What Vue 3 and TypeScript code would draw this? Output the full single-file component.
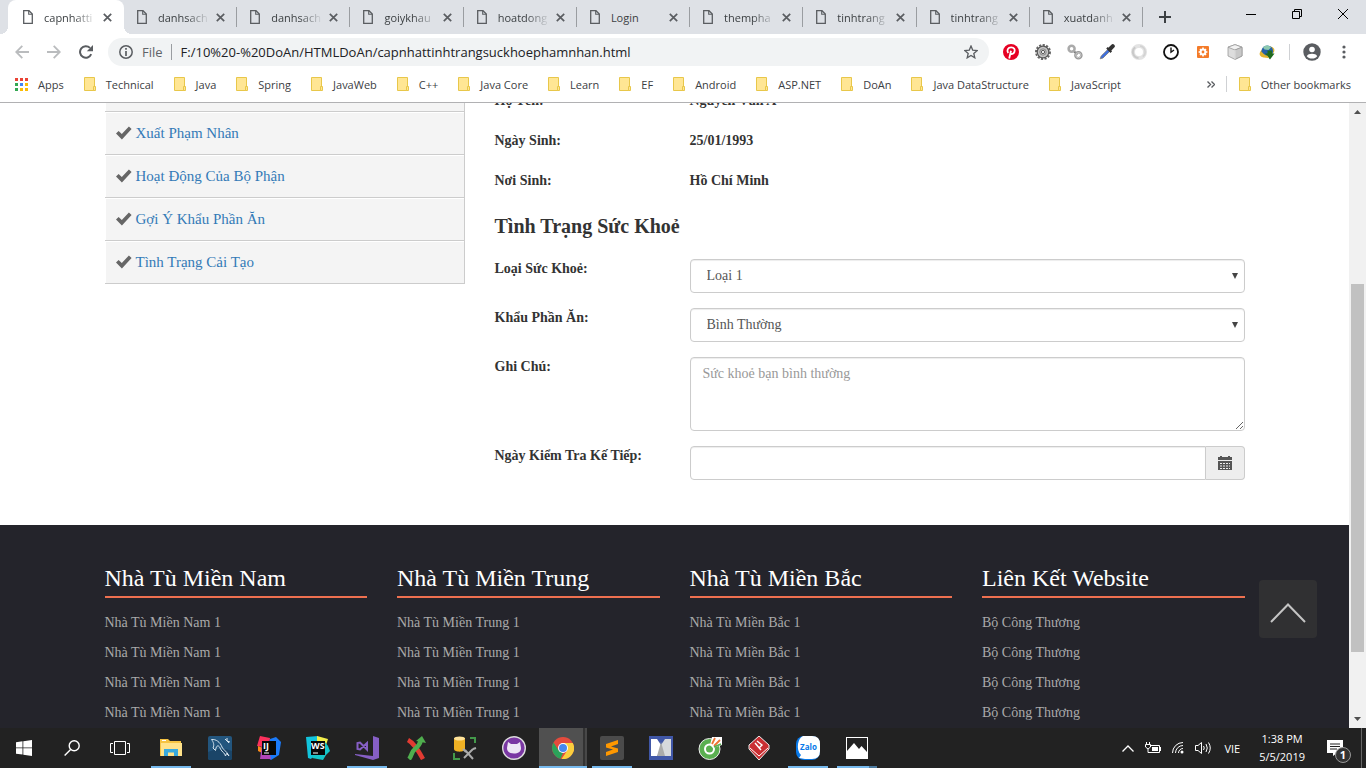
<script setup lang="ts">
import { ref } from 'vue'

interface FooterColumn {
  title: string
  link: string
}

const tabs: string[] = [
  'capnhatti', 'danhsach', 'danhsach', 'goiykhau', 'hoatdong', 'Login',
  'thempha', 'tinhtrang', 'tinhtrang', 'xuatdanh',
]

const bookmarks: string[] = [
  'Technical', 'Java', 'Spring', 'JavaWeb', 'C++', 'Java Core', 'Learn', 'EF',
  'Android', 'ASP.NET', 'DoAn', 'Java DataStructure', 'JavaScript',
]

const appColors: string[] = [
  '#ea4335', '#ea4335', '#ea4335',
  '#34a853', '#4285f4', '#fbbc05',
  '#34a853', '#fbbc05', '#fbbc05',
]

const menu: string[] = ['Xuất Phạm Nhân', 'Hoạt Động Của Bộ Phận', 'Gợi Ý Khẩu Phần Ăn', 'Tình Trạng Cải Tạo']

const footerColumns: FooterColumn[] = [
  { title: 'Nhà Tù Miền Nam', link: 'Nhà Tù Miền Nam 1' },
  { title: 'Nhà Tù Miền Trung', link: 'Nhà Tù Miền Trung 1' },
  { title: 'Nhà Tù Miền Bắc', link: 'Nhà Tù Miền Bắc 1' },
  { title: 'Liên Kết Website', link: 'Bộ Công Thương' },
]

const url = ref('F:/10%20-%20DoAn/HTMLDoAn/capnhattinhtrangsuckhoephamnhan.html')
const health = ref('Loại 1')
const ration = ref('Bình Thường')
const note = ref('')
const nextCheck = ref('')
</script>

<template>
  <div class="desktop">
    <header class="browser">
      <div class="tab-bar">
        <div class="tabs">
          <div v-for="(tab, i) in tabs" :key="i" class="tab" :class="{ active: i === 0 }">
            <svg class="page-icon" width="10" height="14" viewBox="0 0 10 14" fill="none" stroke="#5a5d61">
              <path d="M.7 .7H6L9.3 4V13.3H.7Z" stroke-width="1.3" />
              <path d="M5.7 .7V4.3H9.3" stroke-width="1.1" />
            </svg>
            <span class="tab-title" :class="{ fade: tab.length > 5 }">{{ tab }}</span>
            <button class="tab-close" type="button" aria-label="Close tab">
              <svg width="9" height="9" viewBox="0 0 9 9" stroke="#5a5d61" stroke-width="1.7"><path d="M.8 .8L8.2 8.2M8.2 .8L.8 8.2" /></svg>
            </button>
          </div>
        </div>
        <button class="new-tab" type="button" aria-label="New tab">
          <svg width="12" height="12" viewBox="0 0 12 12" stroke="#3c4043" stroke-width="2"><path d="M6 0V12M0 6H12" /></svg>
        </button>
        <div class="window-buttons">
          <button type="button" aria-label="Minimize"><svg width="10" height="10" stroke="#000"><path d="M0 5.5H10" /></svg></button>
          <button type="button" aria-label="Restore"><svg width="10" height="10" fill="none" stroke="#000"><path d="M.5 2.5H7.5V9.5H.5ZM2.5 2.5V.5H9.5V7.5H7.5" /></svg></button>
          <button type="button" aria-label="Close"><svg width="10" height="10" stroke="#000"><path d="M0 0L10 10M10 0L0 10" /></svg></button>
        </div>
      </div>

      <div class="toolbar">
        <div class="nav">
          <button type="button" aria-label="Back"><svg width="14" height="14" viewBox="0 0 14 14" fill="none" stroke="#babcbe" stroke-width="1.8"><path d="M14 7H1.5M7.3 .8L1.2 7L7.3 13.2" /></svg></button>
          <button type="button" aria-label="Forward"><svg width="14" height="14" viewBox="0 0 14 14" fill="none" stroke="#babcbe" stroke-width="1.8"><path d="M0 7H12.5M6.7 .8L12.8 7L6.7 13.2" /></svg></button>
          <button type="button" aria-label="Reload"><svg width="14" height="14" viewBox="0 0 14 14"><path d="M12.2 9.2A5.8 5.8 0 1 1 11 2.9" fill="none" stroke="#5a5d61" stroke-width="2" /><path d="M14 0V6.2H7.8Z" fill="#5a5d61" /></svg></button>
        </div>
        <div class="omnibox">
          <svg width="14" height="14" viewBox="0 0 14 14"><circle cx="7" cy="7" r="6.2" fill="none" stroke="#5a5d61" stroke-width="1.5" /><path d="M7 3V4.8M7 6V11" stroke="#5a5d61" stroke-width="1.7" /></svg>
          <span class="scheme">File</span>
          <input v-model="url" type="text" aria-label="Address" />
          <button type="button" aria-label="Bookmark this page"><svg width="14" height="14" viewBox="0 0 14 14"><path d="M7 1L8.7 5.1L13.2 5.5L9.8 8.4L10.8 12.8L7 10.4L3.2 12.8L4.2 8.4L.8 5.5L5.3 5.1Z" fill="none" stroke="#5a5d61" stroke-width="1.3" /></svg></button>
        </div>
        <div class="extensions">
          <button type="button" aria-label="Pinterest">
            <svg width="16" height="16" viewBox="0 0 16 16"><circle cx="8" cy="8" r="8" fill="#e60023" /><path d="M6.2 14.5L8 6.8M5.2 9C3.4 6.2 5 3.4 8.2 3.4C11.2 3.4 12.3 5.4 11.4 7.9C10.6 10.3 8.2 10.5 7.4 9.2" fill="none" stroke="#fff" stroke-width="1.8" /></svg>
          </button>
          <button type="button" aria-label="Settings extension">
            <svg width="16" height="16" viewBox="0 0 16 16"><circle cx="8" cy="8" r="7" fill="none" stroke="#666" stroke-width="2" stroke-dasharray="2.2 1.4" /><circle cx="8" cy="8" r="5.8" fill="#c4c4c4" stroke="#555" stroke-width="1.2" /><circle cx="8" cy="8" r="3.2" fill="none" stroke="#8a8a8a" /><circle cx="8" cy="8" r="1.6" fill="#fff" stroke="#555" /></svg>
          </button>
          <button type="button" aria-label="Link extension">
            <svg width="16" height="16" viewBox="0 0 16 16" fill="none"><path d="M6 6.5L10.5 10.5" stroke="#777" stroke-width="2" /><circle cx="4.6" cy="4.8" r="3" stroke="#aaa" stroke-width="2.5" /><circle cx="11.4" cy="11.2" r="3" stroke="#999" stroke-width="2.5" /><circle cx="11.4" cy="11.2" r="2.6" stroke="#ccc" /></svg>
          </button>
          <button type="button" aria-label="Color picker">
            <svg width="16" height="16" viewBox="0 0 16 16"><path d="M1.2 14.8L2.2 12L8.8 5.5L10.7 7.4L4 14Z" fill="#3d6fe0" stroke="#777" stroke-width=".8" /><path d="M8 3.8L12.3 8.1M10.3 5.8L13.7 2.2" stroke="#333" stroke-width="2.2" /><path d="M11 5L13.8 2.2" stroke="#333" stroke-width="4" stroke-linecap="round" /></svg>
          </button>
          <button type="button" aria-label="Ring extension">
            <svg width="16" height="16" viewBox="0 0 16 16" fill="none"><circle cx="8" cy="8" r="6" stroke="#e3e3e3" stroke-width="4" /><path d="M4.2 3.3A6 6 0 0 0 7.5 14" stroke="#c9c9c9" stroke-width="2" /><path d="M11.8 12.7A6 6 0 0 0 9 2" stroke="#d2d2d2" stroke-width="1.5" /></svg>
          </button>
          <button type="button" aria-label="Clock extension">
            <svg width="16" height="16" viewBox="0 0 16 16" fill="none" stroke="#111"><circle cx="8" cy="8" r="7" stroke-width="1.8" /><path d="M8 3.5V8.2L11 6" stroke-width="1.4" /></svg>
          </button>
          <button type="button" aria-label="Gear extension">
            <svg width="16" height="16" viewBox="0 0 16 16"><rect x="2" y="2" width="12" height="12" rx="1" fill="#f47b29" /><circle cx="8" cy="8" r="2.4" fill="none" stroke="#fff" stroke-width="2" /><path d="M8 3.6V5M8 11V12.4M3.6 8H5M11 8H12.4M5 5L6 6M10 10L11 11M11 5L10 6M5 11L6 10" stroke="#fff" stroke-width="1.6" /></svg>
          </button>
          <button type="button" aria-label="Cube extension">
            <svg width="16" height="16" viewBox="0 0 16 16" stroke="#999" stroke-width=".8"><path d="M8 .6L15 3.2V12L8 15.4L1 12V3.2Z" fill="#ddd" /><path d="M1 3.2L8 6L15 3.2L8 .6Z" fill="#f2f2f2" /><path d="M8 6V15.4L15 12V3.2Z" fill="#c8c8c8" /><path d="M8 6V15.4" fill="none" stroke="#fff" /></svg>
          </button>
          <button type="button" aria-label="Download manager">
            <svg width="16" height="16" viewBox="0 0 16 16"><ellipse cx="8" cy="8" rx="7.8" ry="5" fill="#e2b52e" transform="rotate(-25 8 8)" /><circle cx="8.3" cy="7.2" r="5.8" fill="#2460a8" /><path d="M4 3.5C6 1 10 1 12 3.4L9.5 6L5.5 5.5Z" fill="#8cc9b0" /><path d="M8.5 6.5H13V9.5H15.5L11 15.5L6 9.5H8.5Z" fill="#1f6b1e" /><path d="M1 9C3 13 7 14 10 14L8.5 11.8C6 11 4 10 3 8Z" fill="#e2b52e" /></svg>
          </button>
        </div>
        <div class="profile">
          <button type="button" aria-label="Profile"><svg width="18" height="18" viewBox="0 0 18 18"><circle cx="9" cy="9" r="8.7" fill="#5a5d61" /><circle cx="9" cy="6.5" r="2.8" fill="#fff" /><path d="M3.8 13.2C4.6 11.5 6.6 10.8 9 10.8S13.4 11.5 14.2 13.2C13 14.8 11.2 15.6 9 15.6S5 14.8 3.8 13.2Z" fill="#fff" /></svg></button>
          <button type="button" aria-label="Menu"><svg width="4" height="14" viewBox="0 0 4 14" fill="#5a5d61"><circle cx="2" cy="2" r="1.6" /><circle cx="2" cy="7" r="1.6" /><circle cx="2" cy="12" r="1.6" /></svg></button>
        </div>
      </div>

      <nav class="bookmarks" aria-label="Bookmarks">
        <a href="#" class="bookmark">
          <svg width="13" height="13"><rect v-for="(c, i) in appColors" :key="i" :x="(i % 3) * 5" :y="Math.floor(i / 3) * 5" width="3" height="3" :fill="c" /></svg>
          Apps
        </a>
        <a v-for="name in bookmarks" :key="name" href="#" class="bookmark">
          <svg width="12" height="14"><path d="M.5 .5H10.5V13.5H.5Z" fill="#ffe694" stroke="#e8c74a" /><path d="M9.5 9.5H11.5V13.5H9.5Z" fill="#ffe694" stroke="#e8c74a" /></svg>
          {{ name }}
        </a>
        <div class="bookmarks-end">
          <button type="button" aria-label="More bookmarks"><svg width="8" height="7" fill="none" stroke="#5a5d61" stroke-width="1.4"><path d="M.5 .5L3.5 3.5L.5 6.5M4.5 .5L7.5 3.5L4.5 6.5" /></svg></button>
          <a href="#" class="bookmark other">
            <svg width="12" height="14"><path d="M.5 .5H10.5V13.5H.5Z" fill="#ffe694" stroke="#e8c74a" /><path d="M9.5 9.5H11.5V13.5H9.5Z" fill="#ffe694" stroke="#e8c74a" /></svg>
            Other bookmarks
          </a>
        </div>
      </nav>
    </header>

    <div class="viewport">
      <div class="page">
        <main class="content">
          <ul class="side-menu">
            <li class="stub"></li>
            <li v-for="item in menu" :key="item">
              <svg width="16" height="14" viewBox="0 0 16 14"><path d="M0 7.6L2.6 5L5.8 8L12.9 .6L15.6 3.1L5.9 13.6Z" fill="#666" /></svg>
              <a href="#">{{ item }}</a>
            </li>
          </ul>
          <form class="details" @submit.prevent>
            <dl>
              <div><dt>Họ Tên:</dt><dd>Nguyễn Văn A</dd></div>
              <div><dt>Ngày Sinh:</dt><dd>25/01/1993</dd></div>
              <div><dt>Nơi Sinh:</dt><dd>Hồ Chí Minh</dd></div>
            </dl>
            <h3>Tình Trạng Sức Khoẻ</h3>
            <div class="field">
              <label for="health">Loại Sức Khoẻ:</label>
              <div class="select">
                <select id="health" v-model="health" class="control"><option>Loại 1</option></select>
                <svg width="6" height="6"><path d="M0 0H6L3 6Z" fill="#444" /></svg>
              </div>
            </div>
            <div class="field">
              <label for="ration">Khẩu Phần Ăn:</label>
              <div class="select">
                <select id="ration" v-model="ration" class="control"><option>Bình Thường</option></select>
                <svg width="6" height="6"><path d="M0 0H6L3 6Z" fill="#444" /></svg>
              </div>
            </div>
            <div class="field">
              <label for="note">Ghi Chú:</label>
              <textarea id="note" v-model="note" class="control" rows="3" placeholder="Sức khoẻ bạn bình thường"></textarea>
            </div>
            <div class="field">
              <label for="next-check">Ngày Kiểm Tra Kế Tiếp:</label>
              <div class="date-group">
                <input id="next-check" v-model="nextCheck" class="control" type="text" />
                <button type="button" aria-label="Open calendar">
                  <svg width="14" height="14" viewBox="0 0 14 14"><path d="M0 1H2V0H4V1H10V0H12V1H14V4H0ZM0 5H14V14H0Z" fill="#555" /><path d="M2 7.5H12M2 10H12M2 12.5H12" stroke="#eee" stroke-dasharray="2 1" /></svg>
                </button>
              </div>
            </div>
          </form>
        </main>
        <footer class="footer">
          <div class="footer-grid">
            <section v-for="col in footerColumns" :key="col.title">
              <h2>{{ col.title }}</h2>
              <ul>
                <li v-for="n in 4" :key="n"><a href="#">{{ col.link }}</a></li>
              </ul>
            </section>
          </div>
        </footer>
        <button class="to-top" type="button" aria-label="Back to top">
          <svg width="36" height="20" viewBox="0 0 36 20" fill="none" stroke="#c4c4c4" stroke-width="2"><path d="M1 19L18 1.5L35 19" /></svg>
        </button>
      </div>
      <div class="scrollbar">
        <svg width="17" height="17"><path d="M5 11H12L8.500 7Z" fill="#505050" /></svg>
        <div class="track"><div class="thumb"></div></div>
        <svg width="17" height="17"><path d="M5 6H12L8.500 10Z" fill="#505050" /></svg>
      </div>
    </div>

    <div class="taskbar">
      <div class="system">
        <button type="button" aria-label="Start"><svg width="16" height="16" viewBox="0 0 16 16" fill="#fff"><path d="M0 2.200L6.500 1.300V7.500H0ZM7.300 1.200L16 0V7.500H7.300ZM0 8.300H6.500V14.600L0 13.700ZM7.300 8.300H16V16L7.300 14.800Z" /></svg></button>
        <button type="button" aria-label="Search"><svg width="16" height="16" fill="none" stroke="#fff" stroke-width="1.4"><circle cx="10.2" cy="5.8" r="5" /><path d="M6.600 9.400L.6 15.400" /></svg></button>
        <button type="button" aria-label="Task view"><svg width="20" height="14" fill="none" stroke="#fff"><path d="M4.500 .5H15.500V13.500H4.500ZM3 2.500H.5V11.500H3M17 2.500H19.500V11.500H17" /></svg></button>
      </div>
      <div class="apps">
        <button type="button" class="open" aria-label="File Explorer">
          <svg width="24" height="24" viewBox="0 0 24 24"><path d="M1 3H9L11 5H22V20H1Z" fill="#f5c343" /><path d="M2 7H23V20H2Z" fill="#ffe28a" /><path d="M5 13H19V20H15V16.500H9V20H5Z" fill="#38a9de" /><path d="M3 4.500H7" stroke="#fff" /></svg>
        </button>
        <button type="button" aria-label="MySQL Workbench">
          <svg width="24" height="24" viewBox="0 0 24 24"><rect width="24" height="24" rx="2" fill="#23567e" /><path d="M0 16Q12 10 24 15V22Q24 24 22 24H2Q0 24 0 22Z" fill="#1a4568" /><path d="M3.500 3.500C8 3 12 6 14 11C15 14 18 14 21 20L18.500 17.500L17.500 20C17 17 14 16 12.500 13C11 9 9 9 8 12L7.500 14.500L5 12C6.500 9 5.500 6 3.500 3.500M17 3L21 7M19 2V5L22 6" fill="none" stroke="#d7e5ef" stroke-width="1" /></svg>
        </button>
        <button type="button" aria-label="IntelliJ IDEA">
          <svg width="24" height="24" viewBox="0 0 24 24"><path d="M3 0L13 2L12 12L0 10Z" fill="#fc315d" /><path d="M13 3L19 1L24 6L22 19L14 24L8 20Z" fill="#1b7bfa" /><path d="M1 10L6 12L5 17L1 15Z" fill="#fc8a19" /><path d="M5 9L3 23L14 23L12 14Z" fill="#b145b8" /><rect x="5" y="5" width="14" height="14" fill="#080808" /><path d="M7 17H12" stroke="#fff" /><text x="6" y="13" class="logo-text">IJ</text></svg>
        </button>
        <button type="button" aria-label="WebStorm">
          <svg width="24" height="24" viewBox="0 0 24 24"><path d="M0 1L12 0L14 12L5 23L2 22Z" fill="#12c4dc" /><path d="M11 0L22 3L20 9L11 7Z" fill="#f3ef4c" /><path d="M19 6L22 10L24 15L20 19L17 24L6 22L9 11Z" fill="#14c6c9" /><rect x="5" y="5" width="14" height="14" fill="#080808" /><path d="M7 17H12" stroke="#fff" /><text x="5" y="13" class="logo-text">WS</text></svg>
        </button>
        <button type="button" class="open" aria-label="Visual Studio">
          <svg width="24" height="24" viewBox="0 0 24 24"><path d="M18 0L24 2V22L18 24L0 19V18L18 20Z" fill="#865fc5" /><path d="M2.500 7V13L5 13.500L12 7V13.500L5 6.500Z" fill="none" stroke="#865fc5" stroke-width="2" /></svg>
        </button>
        <button type="button" aria-label="X application">
          <svg width="20" height="24" viewBox="0 0 20 24"><path d="M2 4C8 7 12 14 17 23" fill="none" stroke="#e23b32" stroke-width="4.500" /><path d="M3 23C6 20 5 16 9 13S14 8 15 4" fill="none" stroke="#4fae4e" stroke-width="4.500" /><path d="M10 5L16 0L20 7Z" fill="#4fae4e" /></svg>
        </button>
        <button type="button" aria-label="SQL tools">
          <svg width="24" height="24" viewBox="0 0 24 24"><path d="M1 2V13C1 16.500 12 16.500 12 13V2Z" fill="#efb124" /><ellipse cx="6.5" cy="2.500" rx="5.500" ry="2" fill="#ffe39a" /><path d="M17 2H22V7M1 17V23H7" fill="none" stroke="#43994a" stroke-width="2" /><path d="M11 22L20 13M20 13L23 12M12 14L20 23M10 13L13 16" stroke="#ababab" stroke-width="2" /></svg>
        </button>
        <button type="button" aria-label="GitHub Desktop">
          <svg width="24" height="24" viewBox="0 0 24 24"><circle cx="12" cy="12" r="11.300" fill="#7a38a3" stroke="#ddd" stroke-width="1.400" /><path d="M6 6L9 8H15L18 6L19 12C19 16 16 17.500 12 17.500S5 16 5 12Z" fill="#eee8f5" /></svg>
        </button>
        <button type="button" class="open current" aria-label="Chrome">
          <svg width="22" height="22" viewBox="0 0 22 22"><circle cx="11" cy="11" r="11" fill="#e44b3d" /><path d="M1.500 5.500L6.700 13.500L11 16L8.500 21.700A11 11 0 0 1 1.500 5.500Z" fill="#2ba25a" /><path d="M11 6H20.800A11 11 0 0 1 9.500 22L15.300 13.500Z" fill="#fbce3d" /><circle cx="11" cy="11" r="5" fill="#fff" /><circle cx="11" cy="11" r="4" fill="#4688ef" /></svg>
        </button>
        <button type="button" class="open" aria-label="Sublime Text">
          <svg width="24" height="24" viewBox="0 0 24 24"><rect width="24" height="24" rx="2" fill="#4b4b4b" /><path d="M6 8L18 4V8L11 10.400L18 12.500V16L6 20V16L13 13.500L6 11.500Z" fill="#ff9800" /></svg>
        </button>
        <button type="button" aria-label="Mirror application">
          <svg width="24" height="24" viewBox="0 0 24 24"><rect width="24" height="24" fill="#4057a7" /><path d="M2 3H8L12 9V14L8 20H2Z" fill="#fff" /><path d="M22 3H16L12 9V20H22Z" fill="#d7d9dc" /><path d="M12 6L16 20H8Z" fill="#aaa" /></svg>
        </button>
        <button type="button" aria-label="Coc Coc">
          <svg width="24" height="24" viewBox="0 0 24 24"><circle cx="11.500" cy="13" r="10.500" fill="#5aaf50" stroke="#eee" /><circle cx="11.500" cy="13" r="4.500" fill="none" stroke="#fff" stroke-width="2" /><path d="M12 9L14 1H24V9L15 12Z" fill="#fff" /><path d="M14 8L17 2M16 10L22 4" stroke="#ef7433" stroke-width="1.800" /><path d="M16 11L23 8" stroke="#5aaf50" stroke-width="1.800" /></svg>
        </button>
        <button type="button" aria-label="Visual Paradigm">
          <svg width="22" height="24" viewBox="0 0 22 24"><path d="M11 0L21 9V13L11 24L1 13V9Z" fill="#c92e32" stroke="#eee" /><path d="M2 12L11 20L20 12" fill="none" stroke="#fff" /><path d="M7 7L13 14M9 5L14 9L11 12" fill="none" stroke="#fff" stroke-width="1.400" /></svg>
        </button>
        <button type="button" class="open" aria-label="Zalo">
          <svg width="24" height="24" viewBox="0 0 24 24"><rect width="24" height="24" rx="8" fill="#0879e9" /><path d="M7 0H16Q24 0 24 8V15Q24 23 16 23H9L3 22L5 19Q1 15 2 8Q3 2 7 0Z" fill="#fff" /><text x="4" y="14" class="zalo-text">Zalo</text></svg>
        </button>
        <button type="button" class="open several" aria-label="Photos">
          <svg width="22" height="22" viewBox="0 0 22 22"><rect x=".5" y=".5" width="21" height="21" fill="#222" stroke="#fff" /><path d="M1 14L8 6L13 12L15.500 9L21 15V21H1Z" fill="#fff" /></svg>
        </button>
      </div>
      <div class="tray">
        <button type="button" aria-label="Hidden icons"><svg width="12" height="7" fill="none" stroke="#fff" stroke-width="1.300"><path d="M.5 6.500L6 1L11.500 6.500" /></svg></button>
        <button type="button" aria-label="Battery"><svg width="16" height="12" fill="none" stroke="#fff"><path d="M5 3.500H14.500V10.500H5.500M15.500 5V9" /><path d="M7 5H13V9H7Z" fill="#fff" stroke="none" /><path d="M1.500 0V2M4.500 0V2M.5 2.500H5.500V5L3 7L.5 5ZM3 7V10.500H6" /></svg></button>
        <button type="button" aria-label="Network"><svg width="12" height="12" fill="none" stroke="#fff"><path d="M.5 11A10.500 10.500 0 0 1 11 .5M3.500 11A7.500 7.500 0 0 1 11 3.500M6.500 11A4.500 4.500 0 0 1 11 6.500" /><circle cx="10" cy="10" r="1.500" fill="#fff" stroke="none" /></svg></button>
        <button type="button" aria-label="Volume"><svg width="17" height="14" fill="none" stroke="#fff"><path d="M.5 4.500H3L6.500 1.500V12.500L3 9.500H.5ZM8.500 5Q10 7 8.500 9M11 3Q13.500 7 11 11M13.500 1.500Q17 7 13.500 12.500" /></svg></button>
        <span class="language">VIE</span>
        <div class="clock"><span>1:38 PM</span><span>5/5/2019</span></div>
        <button type="button" class="notices" aria-label="Notifications">
          <svg width="16" height="16"><path d="M0 0H16V13H10L6 16V13H0Z" fill="#fff" /><path d="M3 4H13M3 6.500H13M3 9H10" stroke="#222" /></svg>
          <span class="badge">1</span>
        </button>
        <span class="show-desktop"></span>
      </div>
    </div>
  </div>
</template>

<style>
body {
  margin: 0;
}
</style>

<style scoped>
* {
  box-sizing: border-box;
}
.desktop {
  display: flex;
  flex-direction: column;
  height: 100vh;
  overflow: hidden;
  background: #fff;
  font-family: "Open Sans", "Noto Sans", sans-serif;
  font-size: 11px;
  color: #3c4043;
}
svg {
  display: block;
  flex: none;
}
button {
  display: flex;
  align-items: center;
  justify-content: center;
  margin: 0;
  padding: 0;
  border: 0;
  background: none;
  font: inherit;
  color: inherit;
}
a {
  text-decoration: none;
  color: inherit;
}
ul,
dl,
dd,
h2,
h3 {
  margin: 0;
  padding: 0;
  list-style: none;
}

/* Browser frame */
.browser {
  flex: none;
  border-bottom: 1px solid #b1b1b3;
}
.tab-bar {
  display: flex;
  height: 34px;
  padding-left: 8px;
  background: #dee1e6;
}
.tabs {
  display: flex;
  flex: 0 1 1135px;
  min-width: 0;
}
.tab {
  position: relative;
  display: flex;
  flex: 1 1 0;
  align-items: center;
  min-width: 0;
  padding: 0 12px 0 13px;
}
.tab:not(.active)::after {
  content: "";
  position: absolute;
  top: 7px;
  right: 0;
  width: 1px;
  height: 20px;
  background: #9a9da1;
}
.tab.active {
  flex: 0 0 116px;
  padding-left: 15px;
  background: #fff;
  border-radius: 8px 8px 0 0;
}
.tab.active::before,
.tab.active::after {
  content: "";
  position: absolute;
  bottom: 0;
  width: 8px;
  height: 8px;
}
.tab.active::before {
  right: 100%;
  background: radial-gradient(circle at 0 0, transparent 8px, #fff 8px);
}
.tab.active::after {
  left: 100%;
  background: radial-gradient(circle at 100% 0, transparent 8px, #fff 8px);
}
.tab-title {
  flex: 1;
  margin-left: 11px;
  white-space: nowrap;
}
.fade {
  mask-image: linear-gradient(to right, #000 calc(100% - 24px), transparent);
}
.tab-close {
  margin-left: 6px;
}
.new-tab {
  width: 44px;
}
.window-buttons {
  display: flex;
  height: 28px;
  margin-left: auto;
}
.window-buttons button {
  width: 46px;
}
.toolbar {
  display: flex;
  align-items: center;
  height: 36px;
}
.nav {
  display: flex;
  gap: 18px;
  padding: 0 15px;
}
.omnibox {
  display: flex;
  flex: 1;
  align-items: center;
  height: 28px;
  padding: 0 11px;
  border-radius: 14px;
  background: #f1f3f4;
  font-size: 13px;
}
.scheme {
  margin-left: 9px;
  padding-right: 8px;
  border-right: 1px solid #9a9da1;
  line-height: 16px;
  color: #5f6368;
}
.omnibox input {
  flex: 1;
  min-width: 0;
  padding: 0 0 0 9px;
  border: 0;
  outline: 0;
  background: none;
  font: inherit;
  color: #202124;
}
.extensions {
  display: flex;
  gap: 16px;
  padding: 0 14px;
}
.profile {
  display: flex;
  align-items: center;
  gap: 21px;
  height: 16px;
  padding: 0 20px 0 13px;
  border-left: 1px solid #cfd1d4;
}
.bookmarks {
  display: flex;
  align-items: center;
  gap: 20px;
  height: 32px;
  padding: 0 15px 4px;
  white-space: nowrap;
}
.bookmark {
  display: flex;
  align-items: center;
  gap: 10px;
}
.bookmarks-end {
  display: flex;
  align-items: center;
  gap: 11px;
  margin-left: auto;
}
.other {
  height: 16px;
  padding-left: 12px;
  border-left: 1px solid #cfd1d4;
}

/* Web page */
.viewport {
  display: flex;
  flex: 1;
  min-height: 0;
  font-family: "Liberation Serif", "Times New Roman", serif;
  font-size: 14px;
  line-height: 20px;
  color: #333;
}
.page {
  position: relative;
  display: flex;
  flex: 1;
  flex-direction: column;
  overflow: hidden;
}
.content {
  display: grid;
  grid-template-columns: 360fr 750fr;
  gap: 30px;
  width: calc(100% - 30px);
  max-width: 1140px;
  margin: 0 auto;
  padding-bottom: 45px;
}
.side-menu li {
  display: flex;
  align-items: center;
  gap: 4px;
  height: 43px;
  padding-left: 11px;
  border-right: 1px solid #ccc;
  border-bottom: 1px solid #ccc;
  background: #f4f4f4;
  box-shadow: inset 1px 1px 0 #fff;
  font-size: 15px;
  color: #337ab7;
}
.side-menu .stub {
  height: 9px;
  box-shadow: inset 1px 0 0 #fff;
}
.details {
  margin-top: -12px;
}
dl div,
.field {
  display: grid;
  grid-template-columns: 195fr 555fr;
}
dl div {
  margin-bottom: 20px;
}
dt,
dd,
label {
  font-weight: 700;
}
h3 {
  margin: 24px 0 22px;
  font-size: 20px;
  line-height: 22px;
}
.field + .field {
  margin-top: 15px;
}
.control {
  display: block;
  width: 100%;
  height: 34px;
  margin: 0;
  padding: 6px 12px;
  border: 1px solid #ccc;
  border-radius: 4px;
  outline: 0;
  background: #fff;
  box-shadow: inset 0 1px 1px rgba(0, 0, 0, 0.075);
  font: inherit;
  color: #555;
}
.select {
  position: relative;
}
.select .control {
  padding-left: 16px;
  appearance: none;
}
.select svg {
  position: absolute;
  top: 14px;
  right: 7px;
  pointer-events: none;
}
textarea.control {
  height: 74px;
  resize: vertical;
}
textarea::placeholder {
  color: #999;
}
.date-group {
  display: flex;
}
.date-group .control {
  border-radius: 4px 0 0 4px;
}
.date-group button {
  flex: none;
  width: 39px;
  border: 1px solid #ccc;
  border-left: 0;
  border-radius: 0 4px 4px 0;
  background: #eee;
}
.footer {
  flex: 1;
  min-height: 0;
  background: #24242b;
}
.footer-grid {
  display: grid;
  grid-template-columns: repeat(4, 1fr);
  gap: 30px;
  width: calc(100% - 30px);
  max-width: 1140px;
  margin: 0 auto;
  padding-top: 40px;
}
.footer h2 {
  padding-bottom: 5px;
  border-bottom: 2px solid #ee7050;
  font-size: 24px;
  font-weight: 400;
  line-height: 26px;
  color: #fff;
}
.footer ul {
  padding-top: 10px;
}
.footer li {
  line-height: 30px;
  color: #aaa;
}
.to-top {
  position: absolute;
  right: 32px;
  bottom: 90px;
  width: 58px;
  height: 58px;
  padding-top: 8px;
  border-radius: 4px;
  background: #303032;
}
.scrollbar {
  display: flex;
  flex: none;
  flex-direction: column;
  width: 17px;
  background: #f1f1f1;
}
.track {
  position: relative;
  flex: 1;
}
.thumb {
  position: absolute;
  top: 27.7%;
  right: 2px;
  left: 2px;
  height: 62.3%;
  background: #c1c1c1;
}

/* Taskbar */
.taskbar {
  display: flex;
  flex: none;
  height: 40px;
  background: #222;
  color: #fff;
}
.system,
.apps {
  display: flex;
}
.system button,
.apps button {
  position: relative;
  width: 48px;
}
.apps {
  gap: 1px;
  margin-left: 3px;
}
.open::after {
  content: "";
  position: absolute;
  right: 4px;
  bottom: 0;
  left: 4px;
  height: 2px;
  background: #76b9ed;
}
.several::after {
  background: linear-gradient(to right, #76b9ed 32px, #4d7ba0 32px);
}
.current {
  background: linear-gradient(to right, #505050 44px, #333 44px, #333 46px, #484848 46px);
}
.current::after {
  right: 0;
  left: 0;
}
.logo-text {
  font: bold 9px "Open Sans", sans-serif;
  fill: #fff;
}
.zalo-text {
  font: bold 8px "Open Sans", sans-serif;
  fill: #0879e9;
}
.tray {
  display: flex;
  align-items: center;
  gap: 11px;
  margin-left: auto;
}
.language {
  margin: 0 8px 0 1px;
}
.clock {
  display: flex;
  flex-direction: column;
  align-items: center;
  line-height: 18px;
}
.notices {
  position: relative;
  margin: 0 7px 0 11px;
}
.badge {
  position: absolute;
  top: 7px;
  left: 8px;
  width: 16px;
  height: 16px;
  border: 1px solid #999;
  border-radius: 50%;
  background: #333;
  font-weight: 700;
  line-height: 14px;
}
.show-desktop {
  width: 5px;
  height: 40px;
  border-left: 1px solid #666;
}
</style>
